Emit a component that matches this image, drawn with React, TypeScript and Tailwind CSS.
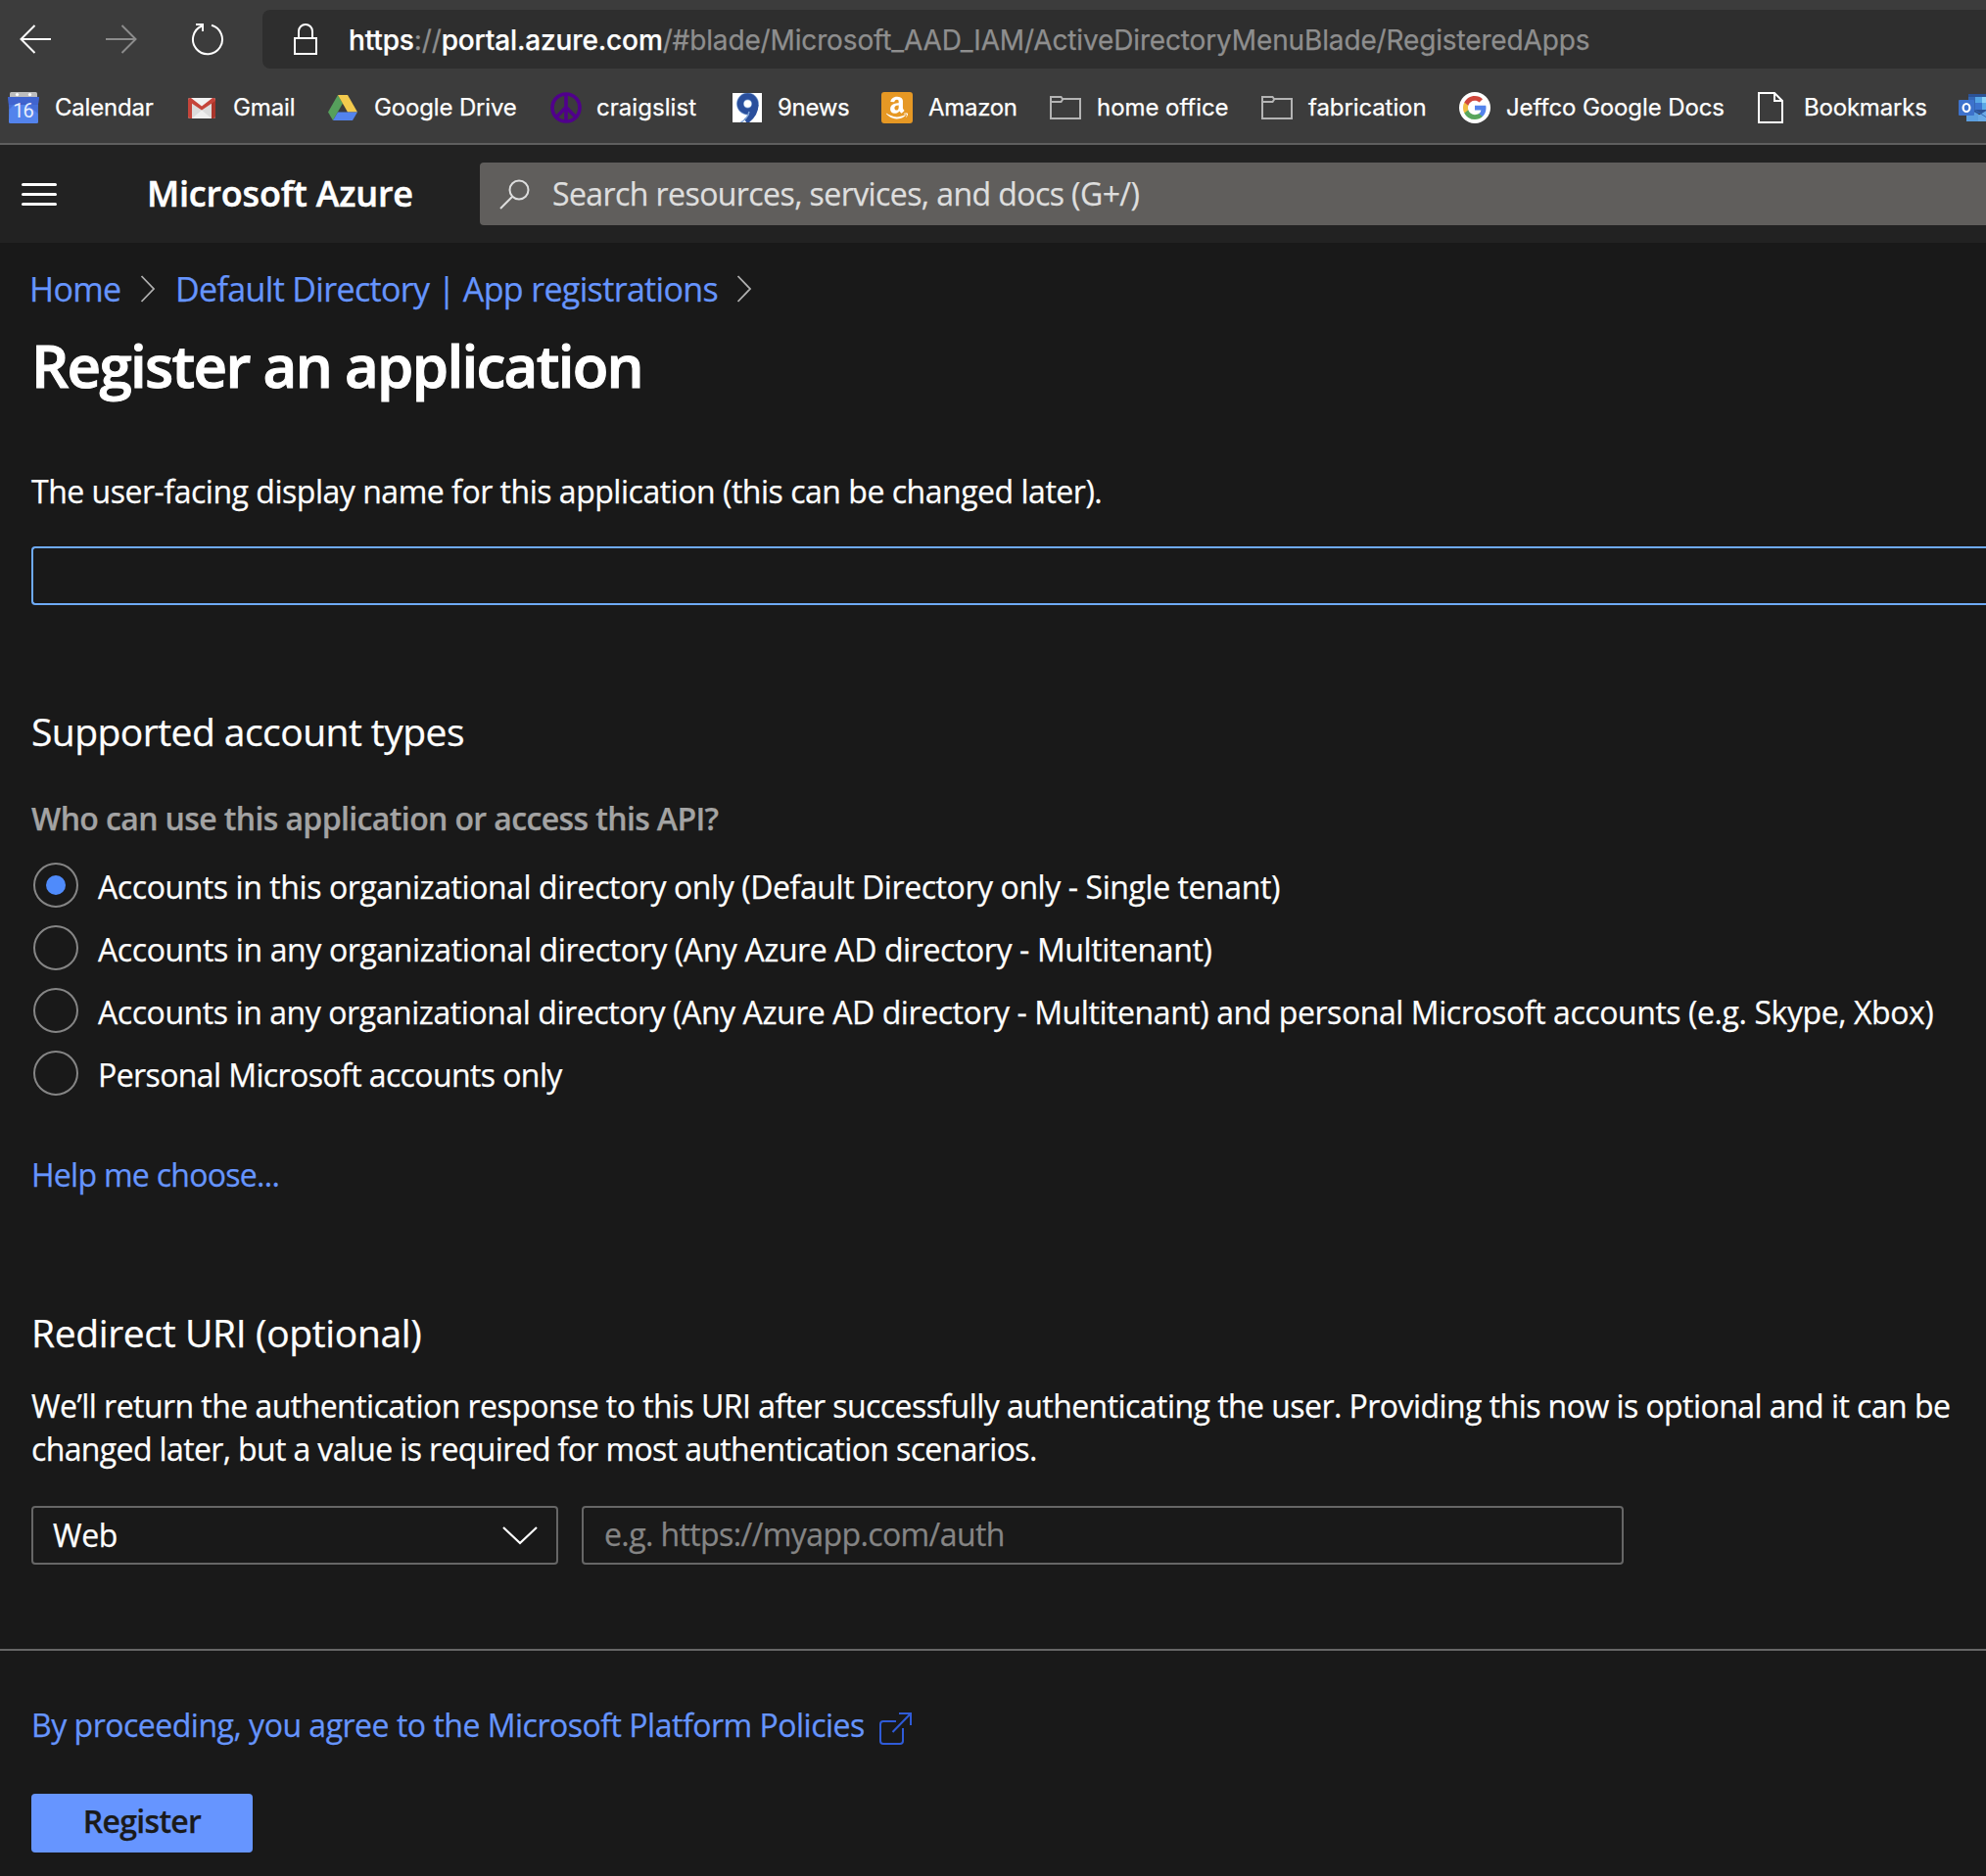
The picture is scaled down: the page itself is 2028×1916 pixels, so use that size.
import React from "react";
import { FaAmazon } from "react-icons/fa";

const ui = "font-['Inter',sans-serif]";
const body = "font-['Open_Sans','Noto_Sans',sans-serif]";

function CalendarIcon() {
  return (
    <svg width="32" height="32" viewBox="0 0 32 32" className="shrink-0">
      <rect x="2" y="0" width="28" height="8" rx="1.5" fill="#bdbdbd" />
      <circle cx="9.5" cy="2.6" r="1.6" fill="#fff" />
      <circle cx="22.5" cy="2.6" r="1.6" fill="#fff" />
      <path d="M0 5h32l-1.4 10H1.4z" fill="#3f5fc9" />
      <path d="M1.2 13h29.6l.2 17.5a1.5 1.5 0 0 1-1.5 1.5H2.5a1.5 1.5 0 0 1-1.5-1.5z" fill="#5383ec" />
      <path d="M0 5h32l-1.2 9v8L18 11H8L1.2 18z" fill="#4266d2" opacity="0.7" />
      <text x="15.5" y="25.5" textAnchor="middle" fontFamily="Roboto, sans-serif" fontSize="20" letterSpacing="-1" fill="#e8eefc">
        16
      </text>
    </svg>
  );
}

function GmailIcon() {
  return (
    <svg width="28" height="32" viewBox="0 0 28 32" className="shrink-0">
      <rect x="0" y="6" width="28" height="21" rx="2" fill="#e3e3e3" />
      <path d="M4 27V11l10 8 10-8v16z" fill="#dcdcdc" />
      <path d="M4 27l10-8.5L24 27z" fill="#efefef" />
      <path d="M2 6h24L14 15.5z" fill="#f1f1f1" />
      <path d="M0 8v17a2 2 0 0 0 2 2h2V10z" fill="#c5443a" />
      <path d="M28 8v17a2 2 0 0 1-2 2h-2V10z" fill="#a8352b" />
      <path d="M0 8a2 2 0 0 1 2-2h1l11 8.6L25 6h1a2 2 0 0 1 2 2v1L14 18.500 0 9z" fill="#c5443a" />
    </svg>
  );
}

function DriveIcon() {
  return (
    <svg width="30" height="26" viewBox="0 0 30 26" className="shrink-0">
      <path d="M10 0L0 17.500 5 26 15 8.500z" fill="#56a05c" />
      <path d="M10 0h10l10 17.500H20z" fill="#f3ca4d" />
      <path d="M10 17.500h20L25 26H5z" fill="#5383ec" />
    </svg>
  );
}

function PeaceIcon() {
  return (
    <svg width="32" height="32" viewBox="0 0 32 32" fill="none" stroke="#50008c" strokeWidth="3.6" className="shrink-0">
      <circle cx="16" cy="16" r="14" />
      <path d="M16 2v28M16 15.500L6.200 25.500M16 15.500l9.800 10" />
    </svg>
  );
}

function NineIcon() {
  return (
    <svg width="30" height="30" viewBox="0 0 30 30" className="shrink-0">
      <rect width="30" height="30" fill="#fff" />
      <circle cx="15.5" cy="11" r="7.6" fill="none" stroke="#7fa3d6" strokeWidth="7.6" />
      <circle cx="15.5" cy="11" r="7.6" fill="none" stroke="#2a4f9c" strokeWidth="6.2" />
      <path d="M23.500 12c0 8-4.500 13-10 17" fill="none" stroke="#2a4f9c" strokeWidth="6" />
      <path d="M8.500 30c5-2.500 7.500-6 8.500-11" fill="none" stroke="#7fa3d6" strokeWidth="1.5" />
    </svg>
  );
}

function AmazonIcon() {
  return (
    <span className="flex size-8 shrink-0 items-center justify-center rounded-[3px] bg-[#e69824] text-white">
      <FaAmazon size={26} />
    </span>
  );
}

function FolderIcon() {
  return (
    <svg width="32" height="24" viewBox="0 0 32 24" fill="none" stroke="#b4b4b4" strokeWidth="2" className="shrink-0">
      <path d="M1 1h10.500l1.500 2h18v20H1z" />
      <path d="M1 6h10.500l2-3" />
    </svg>
  );
}

function GoogleIcon() {
  return (
    <svg width="32" height="32" viewBox="0 0 32 32" className="shrink-0">
      <circle cx="16" cy="16" r="16" fill="#fff" />
      <g transform="translate(4 4)">
        <path fill="#5383ec" d="M23.500 12.270c0-.850-.080-1.670-.220-2.450H12v4.640h6.450a5.520 5.520 0 0 1-2.390 3.620v3.010h3.870c2.260-2.090 3.570-5.160 3.570-8.820z" />
        <path fill="#58a55c" d="M12 24c3.240 0 5.950-1.080 7.930-2.910l-3.870-3.010c-1.070.720-2.450 1.150-4.060 1.150-3.130 0-5.770-2.110-6.720-4.950H1.280v3.100A11.990 11.990 0 0 0 12 24z" />
        <path fill="#f1be42" d="M5.280 14.280a7.200 7.200 0 0 1 0-4.560v-3.100H1.280a12 12 0 0 0 0 10.760z" />
        <path fill="#d0463b" d="M12 4.770c1.760 0 3.340.610 4.590 1.800l3.430-3.430C17.950 1.190 15.240 0 12 0 7.310 0 3.260 2.690 1.280 6.620l4 3.100C6.230 6.880 8.870 4.770 12 4.770z" />
      </g>
    </svg>
  );
}

function PageIcon() {
  return (
    <svg width="26" height="32" viewBox="0 0 26 32" fill="none" stroke="#fff" strokeWidth="2" className="shrink-0">
      <path d="M1 1h16l8 8v22H1z" />
      <path d="M17 1v8h8" />
    </svg>
  );
}

function OutlookIcon() {
  return (
    <svg width="32" height="28" viewBox="0 0 32 28" className="shrink-0">
      <rect x="10" y="0" width="22" height="20" fill="#2b5296" />
      <rect x="10" y="3" width="7" height="13" fill="#3467b5" />
      <rect x="17" y="3" width="7" height="6" fill="#55a5e4" />
      <rect x="24" y="3" width="8" height="6" fill="#8cd3f7" />
      <rect x="17" y="9" width="7" height="7" fill="#3c74cf" />
      <rect x="24" y="9" width="8" height="7" fill="#5aa9e6" />
      <path d="M8 14l24 13v1H8z" fill="#5c9fe0" />
      <path d="M20 22l12-7v13H20z" fill="#68a9e6" />
      <path d="M16 16l16 10" stroke="#3467b5" strokeWidth="1" />
      <rect x="0" y="6" width="16" height="16" rx="1" fill="#3d72cc" />
      <ellipse cx="8" cy="14" rx="3.4" ry="4" fill="none" stroke="#fff" strokeWidth="2.2" />
    </svg>
  );
}

const bookmarks = [
  { label: "Calendar", icon: <CalendarIcon />, cls: "w-[184px] gap-[16px] tracking-[-0.2px]" },
  { label: "Gmail", icon: <GmailIcon />, cls: "w-[143px] gap-[18px] tracking-[-0.1px]" },
  { label: "Google Drive", icon: <DriveIcon />, cls: "w-[227px] gap-[17px] tracking-[-0.15px]" },
  { label: "craigslist", icon: <PeaceIcon />, cls: "w-[186px] gap-[15px] tracking-[0.05px]" },
  { label: "9news", icon: <NineIcon />, cls: "w-[152px] gap-[16px] tracking-[-0.3px]" },
  { label: "Amazon", icon: <AmazonIcon />, cls: "w-[172px] gap-[16px] tracking-[-0.3px]" },
  { label: "home office", icon: <FolderIcon />, cls: "w-[216px] gap-[16px] tracking-[-0.05px]" },
  { label: "fabrication", icon: <FolderIcon />, cls: "w-[202px] gap-[16px] tracking-[-0.1px]" },
  { label: "Jeffco Google Docs", icon: <GoogleIcon />, cls: "w-[305px] gap-[16px] tracking-[-0.1px]" },
  { label: "Bookmarks", icon: <PageIcon />, cls: "w-[205px] gap-[21px] tracking-[-0.2px]" },
];

const accountTypes = [
  { label: "Accounts in this organizational directory only (Default Directory only - Single tenant)", cls: "tracking-[-0.42px]" },
  { label: "Accounts in any organizational directory (Any Azure AD directory - Multitenant)", cls: "tracking-[-0.39px]" },
  {
    label: "Accounts in any organizational directory (Any Azure AD directory - Multitenant) and personal Microsoft accounts (e.g. Skype, Xbox)",
    cls: "tracking-[-0.43px]",
  },
  { label: "Personal Microsoft accounts only", cls: "tracking-[-0.6px]" },
];

function Crumb() {
  return (
    <svg width="16" height="28" viewBox="0 0 16 28" fill="none" stroke="#b0b0b0" strokeWidth="1.8" className="shrink-0">
      <path d="M1.500 1l12.500 13L1.500 27" />
    </svg>
  );
}

function BrowserBar() {
  return (
    <div className={`${ui} h-[148px] border-b-2 border-[#5f5f5f] bg-[#3c3c3c] font-normal text-white`}>
      <div className="flex h-20 items-center pl-5">
        <svg width="32" height="30" viewBox="0 0 32 30" fill="none" stroke="#fff" strokeWidth="2" className="shrink-0">
          <path d="M32 15H1.500M15.500 1L1.500 15l14 14" />
        </svg>
        <svg width="32" height="30" viewBox="0 0 32 30" fill="none" stroke="#8c8c8c" strokeWidth="2" className="ml-14 shrink-0">
          <path d="M0 15h30.500M16.500 1l14 14-14 14" />
        </svg>
        <svg width="34" height="34" viewBox="0 0 34 34" fill="none" stroke="#fff" strokeWidth="2" className="ml-[55px] shrink-0">
          <path d="M21 2.800A15 15 0 1 1 11 3.500" />
          <path d="M5 2h7v7" />
        </svg>
        <div className="ml-[39px] flex h-[60px] flex-1 items-center rounded-l-lg bg-[#2e2e2e] pl-8">
          <svg width="24" height="32" viewBox="0 0 24 32" fill="none" stroke="#fff" strokeWidth="2" className="shrink-0">
            <rect x="1" y="15" width="22" height="16" />
            <path d="M5 15V8a7 7 0 0 1 14 0v7" />
          </svg>
          <div className="ml-8 pt-px text-[28px] tracking-[-0.14px] whitespace-nowrap text-[#8e8e8e]">
            <span className="font-medium text-white">https</span>://
            <span className="font-medium text-white">portal.azure.com</span>
            /#blade/Microsoft_AAD_IAM/ActiveDirectoryMenuBlade/RegisteredApps
          </div>
        </div>
      </div>
      <div className="flex h-[60px] items-center overflow-hidden pl-2 text-[24px] whitespace-nowrap">
        {bookmarks.map((b) => (
          <div key={b.label} className={`flex h-8 shrink-0 items-center ${b.cls}`}>
            {b.icon}
            <span>{b.label}</span>
          </div>
        ))}
        <OutlookIcon />
      </div>
    </div>
  );
}

function AzureHeader() {
  return (
    <div className="flex h-[100px] items-center bg-[#222222] pl-[22px]">
      <div className="flex w-9 flex-col gap-[7px]">
        <div className="h-[3px] rounded bg-white" />
        <div className="h-[3px] rounded bg-white" />
        <div className="h-[3px] rounded bg-white" />
      </div>
      <div className="ml-[92px] w-[340px] text-[36px] font-semibold tracking-[-0.2px] whitespace-nowrap text-white [-webkit-text-stroke:0.5px]">
        Microsoft Azure
      </div>
      <div className="flex h-16 flex-1 items-center rounded-l bg-[#605e5c] pl-5">
        <svg width="31" height="31" viewBox="0 0 31 31" fill="none" stroke="#dedede" strokeWidth="2" className="shrink-0">
          <circle cx="20" cy="11" r="9.5" />
          <path d="M13.200 17.800L1 30" />
        </svg>
        <div className="ml-[23px] text-[32px] tracking-[-0.58px] whitespace-nowrap text-[#dedede]">
          Search resources, services, and docs (G+/)
        </div>
      </div>
    </div>
  );
}

export default function App() {
  return (
    <div className={`${body} h-[1916px] w-[2028px] overflow-hidden bg-[#191919] text-[32px] leading-[44px] text-white [-webkit-text-stroke:0.25px]`}>
      <BrowserBar />
      <AzureHeader />
      <main className="pt-[25px]">
        <nav className="flex h-11 items-center pl-[30px] text-[34px] tracking-[-0.65px] whitespace-nowrap text-[#6695ff]">
          <a className="w-[113px]">Home</a>
          <Crumb />
          <a className="ml-5 w-[573px]">Default Directory | App registrations</a>
          <Crumb />
        </nav>
        <h1 className="mt-4 pl-8 text-[60px] leading-[80px] font-semibold tracking-[-1.7px] [-webkit-text-stroke:1px]">
          Register an application
        </h1>
        <p className="mt-[67px] pl-8 tracking-[-0.48px]">
          The user-facing display name for this application (this can be changed later).
        </p>
        <div className="mt-[34px] ml-8 h-[60px] rounded-l border-2 border-r-0 border-[#6eaaf5]" />

        <h2 className="mt-[103px] pl-8 text-[39px] leading-[52px] tracking-[-0.54px]">Supported account types</h2>
        <p className="mt-[41px] pl-8 font-semibold tracking-[-0.62px] text-[#a3a3a3]">
          Who can use this application or access this API?
        </p>
        <div className="mt-[14px] pl-[34px]">
          {accountTypes.map((t, i) => (
            <label key={t.label} className="flex h-16 items-center whitespace-nowrap">
              <span className="flex size-[46px] shrink-0 items-center justify-center rounded-full border-2 border-[#858585]">
                {i === 0 && <span className="size-5 rounded-full bg-[#4f8bfb]" />}
              </span>
              <span className={`ml-5 pt-[3px] ${t.cls}`}>{t.label}</span>
            </label>
          ))}
        </div>
        <p className="mt-[50px] pl-8 tracking-[-0.72px] text-[#6695ff]">Help me choose...</p>

        <h2 className="mt-[113px] pl-8 text-[39px] leading-[52px] tracking-[-0.36px]">Redirect URI (optional)</h2>
        <div className="mt-[27px] pl-8 whitespace-nowrap">
          <div className="tracking-[-0.55px]">
            We’ll return the authentication response to this URI after successfully authenticating the user. Providing this now is optional and it can be
          </div>
          <div className="tracking-[-0.63px]">changed later, but a value is required for most authentication scenarios.</div>
        </div>
        <div className="mt-9 flex gap-[24px] pl-8">
          <div className="flex h-[60px] w-[538px] items-center justify-between rounded border-2 border-[#666666] pr-[19px] pl-[20px]">
            <span className="tracking-[-0.4px]">Web</span>
            <svg width="36" height="19" viewBox="0 0 36 19" fill="none" stroke="#fff" strokeWidth="2.2">
              <path d="M1 1l17 16L35 1" />
            </svg>
          </div>
          <div className="flex h-[60px] w-[1064px] items-center rounded border-2 border-[#666666] pb-[3px] pl-[21px] tracking-[-0.6px] text-[#858585]">
            e.g. https://myapp.com/auth
          </div>
        </div>

        <div className="mt-[86px] h-0.5 bg-[#666666]" />
        <div className="mt-[54px] flex h-11 items-center pl-8 whitespace-nowrap text-[#6695ff]">
          <span className="w-[866px] tracking-[-0.49px]">By proceeding, you agree to the Microsoft Platform Policies</span>
          <svg width="33" height="33" viewBox="0 0 33 33" fill="none" stroke="#2f5bd8" strokeWidth="2" className="mt-1.5 shrink-0">
            <path d="M17 9H4a3 3 0 0 0-3 3v17a3 3 0 0 0 3 3h17a3 3 0 0 0 3-3V16" />
            <path d="M20 1h12v12M32 1L13.500 20" />
          </svg>
        </div>
        <button className="mt-12 ml-8 block h-[60px] w-[226px] rounded bg-[#6695ff] pb-[5px] font-semibold tracking-[-0.7px] text-[#1a1a1a]">
          Register
        </button>
      </main>
    </div>
  );
}
